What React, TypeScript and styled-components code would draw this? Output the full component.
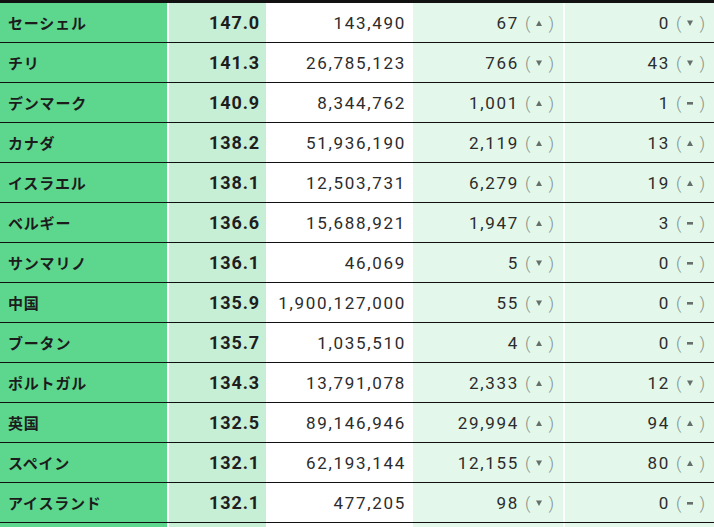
import React from 'react';
import styled, { createGlobalStyle } from 'styled-components';

type Trend = 'up' | 'down' | 'flat';

interface Row {
  name: string;
  score: string;
  population: string;
  total: string;
  totalTrend: Trend;
  recent: string;
  recentTrend: Trend;
}

const rows: Row[] = [
  { name: 'セーシェル', score: '147.0', population: '143,490', total: '67', totalTrend: 'up', recent: '0', recentTrend: 'down' },
  { name: 'チリ', score: '141.3', population: '26,785,123', total: '766', totalTrend: 'down', recent: '43', recentTrend: 'down' },
  { name: 'デンマーク', score: '140.9', population: '8,344,762', total: '1,001', totalTrend: 'up', recent: '1', recentTrend: 'flat' },
  { name: 'カナダ', score: '138.2', population: '51,936,190', total: '2,119', totalTrend: 'up', recent: '13', recentTrend: 'up' },
  { name: 'イスラエル', score: '138.1', population: '12,503,731', total: '6,279', totalTrend: 'up', recent: '19', recentTrend: 'up' },
  { name: 'ベルギー', score: '136.6', population: '15,688,921', total: '1,947', totalTrend: 'up', recent: '3', recentTrend: 'flat' },
  { name: 'サンマリノ', score: '136.1', population: '46,069', total: '5', totalTrend: 'down', recent: '0', recentTrend: 'flat' },
  { name: '中国', score: '135.9', population: '1,900,127,000', total: '55', totalTrend: 'down', recent: '0', recentTrend: 'flat' },
  { name: 'ブータン', score: '135.7', population: '1,035,510', total: '4', totalTrend: 'up', recent: '0', recentTrend: 'flat' },
  { name: 'ポルトガル', score: '134.3', population: '13,791,078', total: '2,333', totalTrend: 'up', recent: '12', recentTrend: 'down' },
  { name: '英国', score: '132.5', population: '89,146,946', total: '29,994', totalTrend: 'up', recent: '94', recentTrend: 'up' },
  { name: 'スペイン', score: '132.1', population: '62,193,144', total: '12,155', totalTrend: 'down', recent: '80', recentTrend: 'up' },
  { name: 'アイスランド', score: '132.1', population: '477,205', total: '98', totalTrend: 'down', recent: '0', recentTrend: 'flat' },
];

const GlobalStyle = createGlobalStyle`
  html, body {
    margin: 0;
    padding: 0;
    background: #ffffff;
    overflow: hidden;
  }
  body {
    font-family: Roboto, "Noto Sans CJK JP", sans-serif;
    color: #222;
  }
`;

const Table = styled.div`
  width: 714px;
  border-top: 3px solid #111;
`;

const RowLine = styled.div`
  display: grid;
  grid-template-columns: 167px 99px 147px 150px 151px;
  height: 40px;
  box-sizing: border-box;
  border-bottom: 1px solid #111;
`;

const Cell = styled.div<{ $bg: string; $gap?: boolean }>`
  display: flex;
  align-items: center;
  justify-content: flex-end;
  padding: 0 7px;
  box-sizing: border-box;
  background: ${({ $bg }) => $bg};
  border-left: ${({ $gap }) => ($gap ? '2px solid #fbfefc' : 'none')};
  font-size: 17px;
  letter-spacing: 1.7px;
  white-space: nowrap;
  color: #2c2c2c;
`;

const TrendCell = styled(Cell)`
  padding-right: 9px;
`;

const NameCell = styled(Cell)`
  justify-content: flex-start;
  padding-left: 8px;
  font-family: "Noto Sans CJK JP", "Noto Sans", sans-serif;
  font-weight: 700;
  font-size: 15px;
  letter-spacing: 0.8px;
  color: #1c1c1c;
`;

const ScoreCell = styled(Cell)`
  font-weight: 700;
  font-size: 18px;
  letter-spacing: 0.9px;
  padding-right: 6px;
  color: #1e1e1e;
`;

const Paren = styled.span`
  color: #86918a;
  letter-spacing: 0;
  font-weight: 300;
`;

const Mark = styled.span`
  display: inline-flex;
  align-items: center;
  justify-content: center;
  width: 18px;
  height: 16px;
`;

const TrendMark: React.FC<{ trend: Trend }> = ({ trend }) => (
  <Mark>
    <svg width="8" height="8" viewBox="0 0 8 8">
      {trend === 'up' && <polygon points="4,1.5 7,7 1,7" fill="#66706a" />}
      {trend === 'down' && <polygon points="1,1.5 7,1.5 4,7" fill="#66706a" />}
      {trend === 'flat' && <rect x="1" y="3" width="6" height="2.6" fill="#66706a" />}
    </svg>
  </Mark>
);

const TrendValue: React.FC<{ value: string; trend: Trend }> = ({ value, trend }) => (
  <>
    {value}&nbsp;
    <Paren>(</Paren>
    <TrendMark trend={trend} />
    <Paren>)</Paren>
  </>
);

export default function App() {
  return (
    <>
      <GlobalStyle />
      <Table>
        {rows.map((r) => (
          <RowLine key={r.name}>
            <NameCell $bg="#5dd68e">{r.name}</NameCell>
            <ScoreCell $bg="#c6efd6" $gap>{r.score}</ScoreCell>
            <Cell $bg="#ffffff">{r.population}</Cell>
            <TrendCell $bg="#e3f8ea">
              <TrendValue value={r.total} trend={r.totalTrend} />
            </TrendCell>
            <TrendCell $bg="#e3f8ea" $gap>
              <TrendValue value={r.recent} trend={r.recentTrend} />
            </TrendCell>
          </RowLine>
        ))}
        <RowLine>
          <NameCell $bg="#5dd68e" />
          <ScoreCell $bg="#c6efd6" $gap />
          <Cell $bg="#ffffff" />
          <TrendCell $bg="#e3f8ea" />
          <TrendCell $bg="#e3f8ea" $gap />
        </RowLine>
      </Table>
    </>
  );
}
